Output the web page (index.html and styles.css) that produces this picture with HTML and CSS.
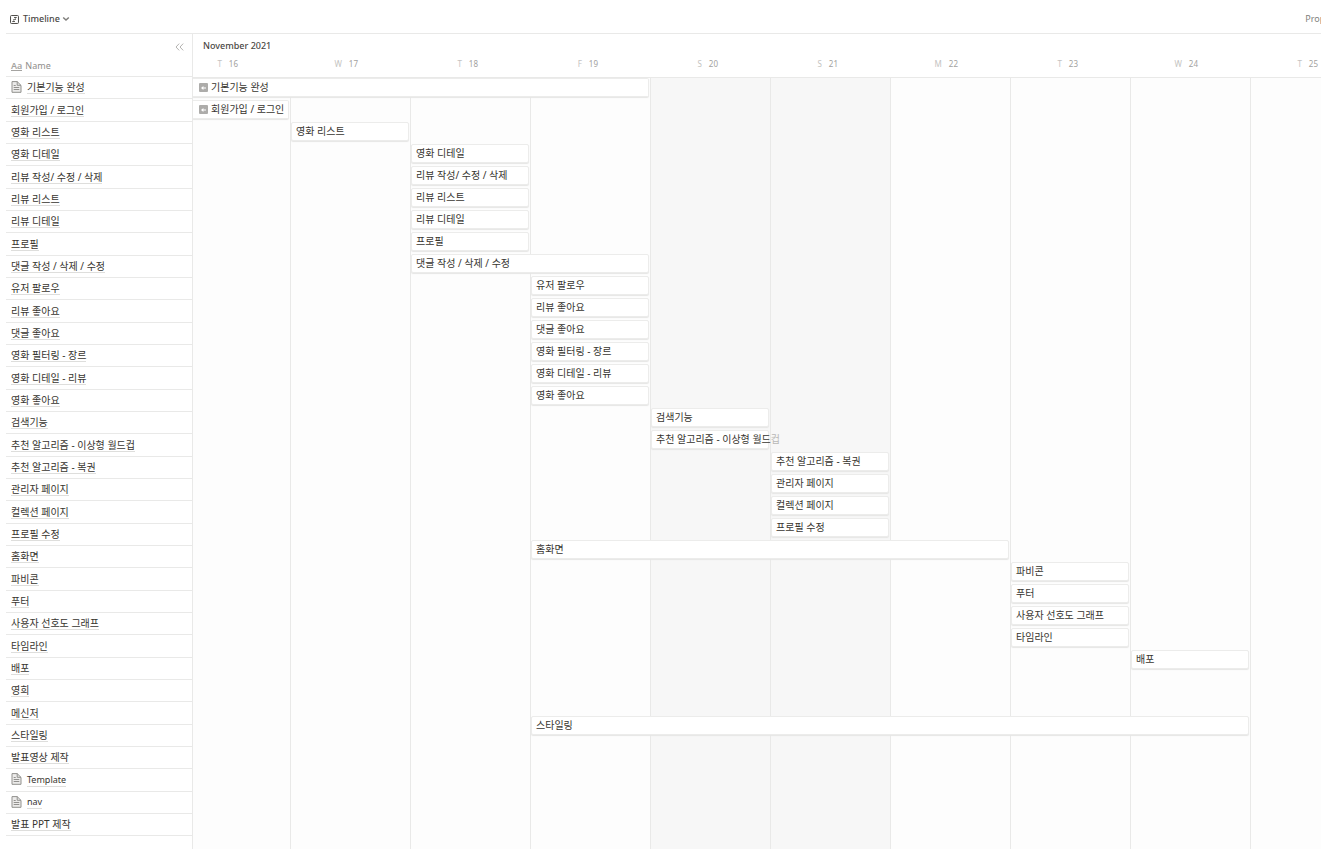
FILE: index.html
```html
<!DOCTYPE html>
<html lang="ko">
<head>
<meta charset="utf-8">
<title>Timeline</title>
<link rel="stylesheet" href="styles.css">
</head>
<body>
<svg class="defs" aria-hidden="true">
  <symbol id="doc" viewBox="0 0 11 12"><path d="M1 .6h5.2L10 4.4v6.9H1z" fill="#ecebea" stroke="#92918e"/><path d="M6.2 .6v3.7H10" fill="none" stroke="#92918e"/><path d="M2.7 4.5h2M2.7 6.5h5.6M2.7 8.5h5.6" stroke="#92918e"/></symbol>
  <symbol id="back" viewBox="0 0 9 9"><rect width="9" height="9" rx="1" fill="#adacaa"/><path d="M2 5l2.4-2v1.4H7v1.2H4.4V7z" fill="#fff"/></symbol>
</svg>
<div class="page">
  <header class="topbar">
    <button class="view" type="button">
      <svg class="view-icon" viewBox="0 0 10 10" aria-hidden="true"><rect x=".6" y=".6" width="8.8" height="8.8" rx="1" fill="none" stroke="#4a4844" stroke-width="1.1"/><path d="M4.6 2.8h2.8M3.8 5h2.6M2.6 7.2h2.8" stroke="#4a4844" stroke-width="1.2"/><path d="M6.8 2.8L3.4 7.2" stroke="#8a8986" stroke-width="1"/></svg>
      Timeline
      <svg class="chevron" viewBox="0 0 8 6" aria-hidden="true"><path d="M1.2 1.5L4 4l2.8-2.5" fill="none" stroke="#7f7e7b" stroke-width="1.5"/></svg>
    </button>
    <button class="properties" type="button">Properties</button>
  </header>
  <main class="board">
    <section class="names">
      <div class="names-head">
        <button class="collapse" type="button" aria-label="Collapse"><svg viewBox="0 0 9 8" aria-hidden="true"><path d="M4.2 .6L1 4l3.2 3.4M8.2 .6L5 4l3.2 3.4" fill="none" stroke="#b3b2b0"/></svg></button>
        <div class="name-label"><span class="aa">Aa</span>Name</div>
      </div>
      <ul class="name-list">
        <li><svg class="doc" aria-hidden="true"><use href="#doc"/></svg><a href="#">기본기능 완성</a></li>
        <li><a href="#">회원가입 / 로그인</a></li>
        <li><a href="#">영화 리스트</a></li>
        <li><a href="#">영화 디테일</a></li>
        <li><a href="#">리뷰 작성/ 수정 / 삭제</a></li>
        <li><a href="#">리뷰 리스트</a></li>
        <li><a href="#">리뷰 디테일</a></li>
        <li><a href="#">프로필</a></li>
        <li><a href="#">댓글 작성 / 삭제 / 수정</a></li>
        <li><a href="#">유저 팔로우</a></li>
        <li><a href="#">리뷰 좋아요</a></li>
        <li><a href="#">댓글 좋아요</a></li>
        <li><a href="#">영화 필터링 - 장르</a></li>
        <li><a href="#">영화 디테일 - 리뷰</a></li>
        <li><a href="#">영화 좋아요</a></li>
        <li><a href="#">검색기능</a></li>
        <li><a href="#">추천 알고리즘 - 이상형 월드컵</a></li>
        <li><a href="#">추천 알고리즘 - 복권</a></li>
        <li><a href="#">관리자 페이지</a></li>
        <li><a href="#">컬렉션 페이지</a></li>
        <li><a href="#">프로필 수정</a></li>
        <li><a href="#">홈화면</a></li>
        <li><a href="#">파비콘</a></li>
        <li><a href="#">푸터</a></li>
        <li><a href="#">사용자 선호도 그래프</a></li>
        <li><a href="#">타임라인</a></li>
        <li><a href="#">배포</a></li>
        <li><a href="#">영희</a></li>
        <li><a href="#">메신저</a></li>
        <li><a href="#">스타일링</a></li>
        <li><a href="#">발표영상 제작</a></li>
        <li><svg class="doc" aria-hidden="true"><use href="#doc"/></svg><a class="latin" href="#">Template</a></li>
        <li><svg class="doc" aria-hidden="true"><use href="#doc"/></svg><a class="latin" href="#">nav</a></li>
        <li><a href="#">발표 PPT 제작</a></li>
      </ul>
    </section>
    <section class="timeline">
      <div class="time-head">
        <h2 class="month">November 2021</h2>
        <div class="days">
          <div class="day"><span>T</span>16</div>
          <div class="day"><span>W</span>17</div>
          <div class="day"><span>T</span>18</div>
          <div class="day"><span>F</span>19</div>
          <div class="day"><span>S</span>20</div>
          <div class="day"><span>S</span>21</div>
          <div class="day"><span>M</span>22</div>
          <div class="day"><span>T</span>23</div>
          <div class="day"><span>W</span>24</div>
          <div class="day"><span>T</span>25</div>
        </div>
      </div>
      <div class="chart">
        <div class="columns"><i></i><i></i><i></i><i></i><i class="weekend"></i><i class="weekend"></i><i></i><i></i><i></i><i></i></div>
        <div class="track"><div class="bar from16 to19"><svg class="back" aria-hidden="true"><use href="#back"/></svg>기본기능 완성</div></div>
        <div class="track"><div class="bar from16"><svg class="back" aria-hidden="true"><use href="#back"/></svg>회원가입 / 로그인</div></div>
        <div class="track"><div class="bar from17">영화 리스트</div></div>
        <div class="track"><div class="bar from18">영화 디테일</div></div>
        <div class="track"><div class="bar from18">리뷰 작성/ 수정 / 삭제</div></div>
        <div class="track"><div class="bar from18">리뷰 리스트</div></div>
        <div class="track"><div class="bar from18">리뷰 디테일</div></div>
        <div class="track"><div class="bar from18">프로필</div></div>
        <div class="track"><div class="bar from18 to19">댓글 작성 / 삭제 / 수정</div></div>
        <div class="track"><div class="bar from19">유저 팔로우</div></div>
        <div class="track"><div class="bar from19">리뷰 좋아요</div></div>
        <div class="track"><div class="bar from19">댓글 좋아요</div></div>
        <div class="track"><div class="bar from19">영화 필터링 - 장르</div></div>
        <div class="track"><div class="bar from19">영화 디테일 - 리뷰</div></div>
        <div class="track"><div class="bar from19">영화 좋아요</div></div>
        <div class="track"><div class="bar from20">검색기능</div></div>
        <div class="track"><div class="bar from20">추천 알고리즘 - 이상형 월드<span class="spill">컵</span></div></div>
        <div class="track"><div class="bar from21">추천 알고리즘 - 복권</div></div>
        <div class="track"><div class="bar from21">관리자 페이지</div></div>
        <div class="track"><div class="bar from21">컬렉션 페이지</div></div>
        <div class="track"><div class="bar from21">프로필 수정</div></div>
        <div class="track"><div class="bar from19 to22">홈화면</div></div>
        <div class="track"><div class="bar from23">파비콘</div></div>
        <div class="track"><div class="bar from23">푸터</div></div>
        <div class="track"><div class="bar from23">사용자 선호도 그래프</div></div>
        <div class="track"><div class="bar from23">타임라인</div></div>
        <div class="track"><div class="bar from24">배포</div></div>
        <div class="track"></div>
        <div class="track"></div>
        <div class="track"><div class="bar from19 to24">스타일링</div></div>
      </div>
    </section>
  </main>
</div>
</body>
</html>
```

FILE: styles.css
```css
* { box-sizing: border-box; }

body {
  margin: 0;
  background: #fff;
  color: #37352f;
  font: 10px/14px "Noto Sans", "Noto Sans CJK KR", sans-serif;
}

button {
  border: 0;
  padding: 0;
  background: none;
  color: inherit;
  font: inherit;
}

.defs { display: none; }

.page {
  display: flex;
  flex-direction: column;
  min-height: 100vh;
  padding-left: 6px;
  overflow: hidden;
}

.topbar {
  display: flex;
  align-items: center;
  justify-content: space-between;
  height: 34px;
  padding: 5px 0 0 4px;
  border-bottom: 1px solid #e9e9e8;
  font-size: 9px;
}

.view {
  display: flex;
  align-items: center;
  color: #4a4844;
  font-weight: 500;
}

.view-icon { width: 9px; height: 9px; margin-right: 4px; }
.chevron { width: 8px; height: 6px; margin-left: 2px; }

/* The toolbar runs past the right edge of the window. */
.properties {
  margin-right: -28px;
  color: #82817d;
}

.board { display: flex; flex: 1; }

.names {
  flex: none;
  width: 187px;
  border-right: 1px solid #e9e9e8;
}

.names-head {
  display: flex;
  flex-direction: column;
  justify-content: space-between;
  height: 43px;
  padding: 9px 8px 3px 5px;
  border-bottom: 1px solid #e9e9e8;
}

.collapse { align-self: flex-end; height: 8px; line-height: 0; }
.collapse svg { width: 9px; height: 8px; }

.name-label {
  display: flex;
  align-items: center;
  gap: 3px;
  color: #8f8e8b;
  font-size: 9px;
}

.aa {
  border-bottom: 1px solid #a5a4a1;
  color: #a5a4a1;
  font-weight: 600;
  line-height: 8px;
}

.name-list { margin: 0; padding: 0; list-style: none; }

.name-list li {
  display: flex;
  align-items: center;
  height: 22px;
  padding-left: 5px;
  border-bottom: 1px solid #e9e9e8;
}

.name-list li:nth-child(3n + 2) { height: 23px; }

.name-list a {
  border-bottom: 1px solid #dededc;
  color: inherit;
  line-height: 12px;
  text-decoration: none;
  white-space: nowrap;
}

.name-list .latin { font-size: 9px; }
.doc { width: 11px; height: 12px; margin: 0 5px 2px 0; }

.timeline {
  display: flex;
  flex: 1;
  flex-direction: column;
  min-width: 0;
  overflow: hidden;
}

.time-head {
  height: 44px;
  padding-top: 5px;
  border-bottom: 1px solid #e9e9e8;
}

.month {
  margin: 0 0 4px;
  padding-left: 10px;
  color: #4a4844;
  font-size: 9px;
  font-weight: 500;
}

.days, .columns, .track {
  display: grid;
  grid-template-columns: 98px repeat(9, 120px);
}

.day {
  display: flex;
  justify-content: flex-end;
  gap: 7px;
  padding-right: 53px;
  color: #a3a2a0;
  font-size: 8px;
}

.day span { color: #c4c3c1; }

.chart {
  position: relative;
  flex: 1;
  background: #fdfdfd;
}

.columns { position: absolute; inset: 0; }
.columns i { border-right: 1px solid #e9e9e8; }
.columns .weekend { background: #f7f7f7; }

.track { position: relative; height: 22px; }

.bar {
  display: flex;
  align-items: center;
  height: 19px;
  margin-right: 2px;
  padding: 0 0 2px 4px;
  border: 1px solid #ececeb;
  border-radius: 2px;
  background: #fff;
  box-shadow: 0 1px 1px #e6e6e5;
  white-space: nowrap;
}

.back { width: 9px; height: 9px; margin: 1px 3px 0 2px; }
.spill { color: #b9b8b6; }

.from16 { grid-column-start: 1; border-left: 0; border-radius: 0 2px 2px 0; }
.from17 { grid-column-start: 2; }
.from18 { grid-column-start: 3; }
.from19 { grid-column-start: 4; }
.from20 { grid-column-start: 5; }
.from21 { grid-column-start: 6; }
.from23 { grid-column-start: 8; }
.from24 { grid-column-start: 9; }
.to19 { grid-column-end: 5; }
.to22 { grid-column-end: 8; }
.to24 { grid-column-end: 10; }
```
